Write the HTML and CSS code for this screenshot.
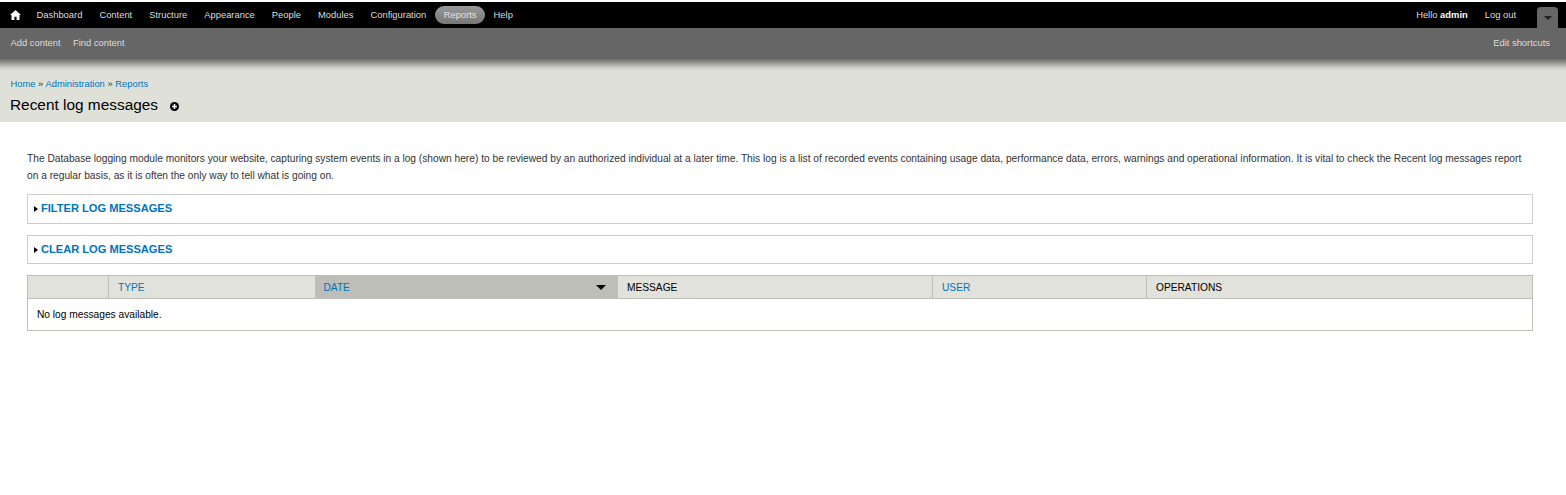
FILE: index.html
```html
<!DOCTYPE html>
<html lang="en">
<head>
<meta charset="utf-8">
<title>Recent log messages</title>
<link rel="stylesheet" href="styles.css">
</head>
<body>
<div class="toolbar">
  <nav class="menu">
    <a class="home" href="#"><svg width="11" height="10" viewBox="0 0 11 10"><path d="M5.5 0 L11 5 L9.5 5 L9.5 10 L6.6 10 L6.6 6.8 L4.4 6.8 L4.4 10 L1.5 10 L1.5 5 L0 5 Z" fill="#fff"/></svg></a>
    <a href="#">Dashboard</a>
    <a href="#">Content</a>
    <a href="#">Structure</a>
    <a href="#">Appearance</a>
    <a href="#">People</a>
    <a href="#">Modules</a>
    <a href="#">Configuration</a>
    <a class="active" href="#">Reports</a>
    <a href="#">Help</a>
  </nav>
  <div class="user">
    <span class="hello">Hello <strong>admin</strong></span>
    <a href="#">Log out</a>
    <span class="drawer"><span class="drawer-arrow"></span></span>
  </div>
</div>
<div class="shortcuts">
  <div class="shortcut-links"><a href="#">Add content</a><a href="#">Find content</a></div>
  <a href="#">Edit shortcuts</a>
</div>
<div class="shade"></div>
<header class="head">
  <div class="crumbs"><a href="#">Home</a> » <a href="#">Administration</a> » <a href="#">Reports</a></div>
  <h1>Recent log messages <span class="add"><svg width="9" height="9" viewBox="0 0 9 9"><circle cx="4.5" cy="4.5" r="4.5" fill="#000"/><path d="M2 4.5H7M4.5 2V7" stroke="#fff" stroke-width="1.6"/></svg></span></h1>
</header>
<main class="content">
  <p class="intro">The Database logging module monitors your website, capturing system events in a log (shown here) to be reviewed by an authorized individual at a later time. This log is a list of recorded events containing usage data, performance data, errors, warnings and operational information. It is vital to check the Recent log messages report on a regular basis, as it is often the only way to tell what is going on.</p>
  <div class="fieldset"><span class="tri"></span><a href="#">Filter log messages</a></div>
  <div class="fieldset second"><span class="tri"></span><a href="#">Clear log messages</a></div>
  <table class="log">
    <colgroup>
      <col class="c1"><col class="c2"><col class="c3"><col class="c4"><col class="c5"><col>
    </colgroup>
    <thead>
      <tr>
        <th></th>
        <th><a href="#">Type</a></th>
        <th class="sorted"><div class="sort-cell"><a href="#">Date</a><span class="sort-arrow"></span></div></th>
        <th>Message</th>
        <th><a href="#">User</a></th>
        <th>Operations</th>
      </tr>
    </thead>
    <tbody>
      <tr><td colspan="6">No log messages available.</td></tr>
    </tbody>
  </table>
</main>
</body>
</html>
```

FILE: styles.css
```css
* { box-sizing: border-box; }
html, body { margin: 0; padding: 0; background: #fff; }
body {
  font-family: "Liberation Sans", Arial, sans-serif;
  font-size: 10.2px;
  line-height: 14px;
  color: #333;
  padding-top: 2px;
}
a { text-decoration: none; color: #0074bd; }

.toolbar {
  height: 26px;
  background: #000;
  display: flex;
  justify-content: space-between;
  align-items: center;
  padding-left: 5px;
  color: #ddd;
  font-size: 9.4px;
}
.toolbar a { color: #ddd; }
.menu { display: flex; align-items: center; }
.menu a { padding: 2px 8.5px; height: 18px; line-height: 14px; border-radius: 9px; }
.menu .home { padding: 4px 5px 0 5px; margin-right: 2px; }
.home svg { display: block; }
.menu .active { background-image: linear-gradient(#999, #777); color: #e4e4e4; margin: 0 0 0 0.5px; padding: 2px 8.5px; }
.user { display: flex; align-items: center; padding-right: 8px; }
.hello strong { color: #fff; }
.user a { margin-left: 17px; }
.drawer {
  width: 21px;
  height: 21px;
  margin: 5px 0 0 21px;
  background: #666;
  border-radius: 4px 4px 0 0;
  display: flex;
  justify-content: center;
  padding-top: 9px;
}
.drawer-arrow { width: 0; height: 0; border: 4px solid transparent; border-top: 4px solid #222; border-bottom: 0; }

.shortcuts {
  height: 30px;
  background: #666;
  display: flex;
  justify-content: space-between;
  align-items: center;
  padding: 0 16px 0 10.5px;
  color: #ddd;
  font-size: 9.4px;
}
.shortcuts a { color: #ddd; }
.shortcut-links { display: flex; gap: 12.5px; }
.shade { height: 14px; background: linear-gradient(#5f5f5f, #9a9a94 35%, #d4d5cd 75%, #dfe1d9); }

.head { height: 50px; background: #dfe1d9; padding: 5px 10.5px 0; }
.crumbs { color: #333; font-size: 9.4px; }
h1 {
  margin: 4px 0 0 -0.5px;
  font-size: 15.4px;
  line-height: 20px;
  font-weight: normal;
  color: #000;
  display: flex;
  align-items: center;
}
.add { margin-left: 12px; display: flex; padding-top: 2px; }

.content { padding: 28px 33px 0 27px; }
.intro { margin: 0 0 12px; line-height: 17px; height: 32px; }
.fieldset {
  height: 30px;
  border: 1px solid #ccc;
  display: flex;
  align-items: center;
  padding: 0 6px 2px;
  margin-bottom: 11px;
}
.fieldset.second { height: 29px; margin-bottom: 11px; }
.fieldset a { font-size: 11.1px; font-weight: bold; text-transform: uppercase; }
.tri { width: 0; height: 0; border: 3px solid transparent; border-left: 4px solid #000; border-right: 0; margin-right: 3px; margin-top: 2px; }

.log { width: 100%; border-collapse: collapse; table-layout: fixed; border: 1px solid #bebfb9; }
.c1 { width: 81px; }
.c2 { width: 206px; }
.c3 { width: 303px; }
.c4 { width: 315px; }
.c5 { width: 214px; }
.log th {
  height: 23px;
  padding: 1px 9px 0;
  background: #e1e2dc;
  border-bottom: 1px solid #bebfb9;
  border-left: 1px solid #bebfb9;
  text-align: left;
  font-weight: normal;
  text-transform: uppercase;
  color: #000;
}
.log th:first-child { border-left: 0; }
.log th.sorted { background: #bdbeb8; border-left: 0; }
.sort-cell { display: flex; justify-content: space-between; align-items: center; }
.sort-arrow { width: 0; height: 0; border: 5px solid transparent; border-top: 5px solid #000; border-bottom: 0; margin-right: 2px; }
.log td { height: 32px; padding: 0 9px; color: #000; }
```
